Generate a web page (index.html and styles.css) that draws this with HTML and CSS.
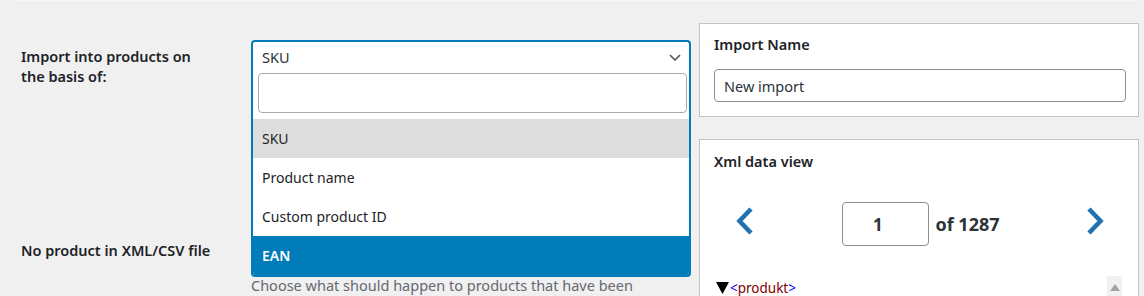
FILE: index.html
```html
<!DOCTYPE html>
<html lang="en">
<head>
<meta charset="utf-8">
<title>Import settings</title>
<link rel="stylesheet" href="styles.css">
</head>
<body>
<div class="topline"></div>
<div class="main">
  <div class="form">
    <div class="row row-first">
      <div class="label">Import into products on the basis of:</div>
      <div class="field">
        <div class="select">
          <div class="selection">
            <span class="sel-text">SKU</span>
            <svg class="chev" width="12" height="7" viewBox="0 0 12 7"><polyline points="1,1 6,6 11,1" fill="none" stroke="#50575e" stroke-width="1.6"/></svg>
          </div>
          <div class="dropdown">
            <div class="search"><input class="search-input" type="text"></div>
            <ul class="options">
              <li class="opt opt-hover">SKU</li>
              <li class="opt">Product name</li>
              <li class="opt">Custom product ID</li>
              <li class="opt opt-selected">EAN</li>
            </ul>
          </div>
        </div>
      </div>
    </div>
    <div class="row row-second">
      <div class="label label-second">No product in XML/CSV file</div>
      <div class="field">
        <div class="selection plain"></div>
        <p class="desc">Choose what should happen to products that have been</p>
      </div>
    </div>
  </div>
  <div class="side">
    <div class="panel panel-name">
      <h3 class="panel-title">Import Name</h3>
      <input class="name-input" type="text" value="New import">
    </div>
    <div class="panel panel-xml">
      <h3 class="panel-title">Xml data view</h3>
      <div class="pager">
        <svg class="arrow" width="18" height="28" viewBox="0 0 18 28"><polyline points="15,2 3.5,14 15,26" fill="none" stroke="#2271b1" stroke-width="4.6"/></svg>
        <div class="pager-center">
          <input class="page-input" type="text" value="1">
          <span class="page-total">of 1287</span>
        </div>
        <svg class="arrow" width="18" height="28" viewBox="0 0 18 28"><polyline points="3,2 14.5,14 3,26" fill="none" stroke="#2271b1" stroke-width="4.6"/></svg>
      </div>
      <div class="tree">
        <div class="tree-content">
          <svg class="tri" width="13" height="12" viewBox="0 0 13 12"><polygon points="0,0 13,0 6.5,12" fill="#000"/></svg><span class="tag">&lt;</span><span class="tname">produkt</span><span class="tag">&gt;</span>
        </div>
        <div class="scrollbar"><svg width="10" height="7" viewBox="0 0 10 7"><polygon points="0,7 10,7 5,0" fill="#a3a3a3"/></svg></div>
      </div>
    </div>
  </div>
</div>
</body>
</html>
```
FILE: styles.css
```css
html, body { margin: 0; padding: 0; }
body {
  background: #f0f0f1;
  font-family: "Noto Sans", "Open Sans", sans-serif;
  font-size: 14.5px;
  color: #1d2327;
  height: 296px;
  overflow: hidden;
}
.topline { height: 1px; margin: 0 6px 0 18px; background: #f8f8f8; }
.main { display: flex; align-items: flex-start; gap: 8px; }
.form { width: 670px; padding-left: 21px; margin-top: 39px; }
.row { display: grid; grid-template-columns: 230px 440px; align-items: start; }
.label { font-weight: 600; line-height: 20px; padding-top: 6px; padding-right: 40px; }
.row-second { margin-top: 152px; }
.label-second { padding-top: 2px; }
.field { position: relative; }
.select { position: relative; }
.selection {
  height: 32px; box-sizing: border-box;
  border: 2px solid #007cba; border-bottom: none;
  border-radius: 4px 4px 0 0;
  background: #fff;
  display: flex; align-items: center; justify-content: space-between;
  padding: 0 8px 0 9px;
  color: #2c3338;
}
.selection.plain { border: 1px solid #8c8f94; border-radius: 4px; padding-left: 10px; }
.chev { display: block; margin-top: 1px; }
.dropdown {
  position: absolute; left: 0; right: 0; top: 32px; z-index: 2;
  background: #fff;
  border: 2px solid #007cba; border-top: none;
  border-radius: 0 0 4px 4px;
  overflow: hidden;
}
.search { padding: 1px 0 6px 5px; }
.search-input {
  display: block; box-sizing: border-box; width: 429px; height: 40px; margin: 0;
  border: 1px solid #aaaaaa; border-radius: 4px; background: #fff;
  font: inherit; outline: none;
}
.options { list-style: none; margin: 0; padding: 0; }
.opt { height: 39px; line-height: 39px; padding-left: 9px; color: #1d2327; font-size: 14px; }
.opt-hover { background: #dddddd; }
.opt-selected { background: #007cba; color: #fff; font-weight: 600; }
.desc { margin: 5px 0 0; line-height: 20px; color: #646970; }
.side { width: 440px; margin-top: 22px; }
.panel {
  background: #fff; border: 1px solid #c3c4c7;
  padding: 10px 12px 14px 14px;
}
.panel-xml { margin-top: 22px; padding-top: 11px; padding-bottom: 40px; }
.panel-title { margin: 0; font-size: 14.5px; font-weight: 600; line-height: 20px; color: #1d2327; }
.name-input {
  display: block; box-sizing: border-box; width: 100%; height: 33px; margin: 15px 0 0;
  border: 1px solid #8c8f94; border-radius: 4px; padding: 0 9px;
  font: inherit; color: #2c3338; background: #fff; outline: none;
}
.pager { display: flex; align-items: center; justify-content: space-between; margin-top: 31px; padding: 0 22px 0 22px; }
.arrow { display: block; margin-top: -6px; }
.pager-center { display: flex; align-items: center; gap: 6px; margin-left: 2px; }
.page-input {
  box-sizing: border-box; width: 87px; height: 44px; margin: 0; padding: 0 16px 0 0;
  border: 1px solid #8c8f94; border-radius: 4px; background: #fff;
  text-align: center; font-family: inherit; font-size: 17px; font-weight: 700; color: #2c3338; outline: none;
}
.page-total { font-size: 18px; font-weight: 700; color: #2c3338; }
.tree { display: flex; margin-top: 30px; margin-right: 4px; }
.tree-content { flex: 1; padding-left: 2px; padding-top: 3px; font-size: 13.5px; line-height: 18px; }
.tri { display: inline-block; vertical-align: -1px; margin-right: 1px; }
.tag { color: #0000ff; }
.tname { color: #800000; }
.scrollbar { width: 15px; height: 40px; background: #f1f1f1; display: flex; justify-content: center; padding-top: 8px; box-sizing: border-box; }
.scrollbar svg { display: block; }
```
